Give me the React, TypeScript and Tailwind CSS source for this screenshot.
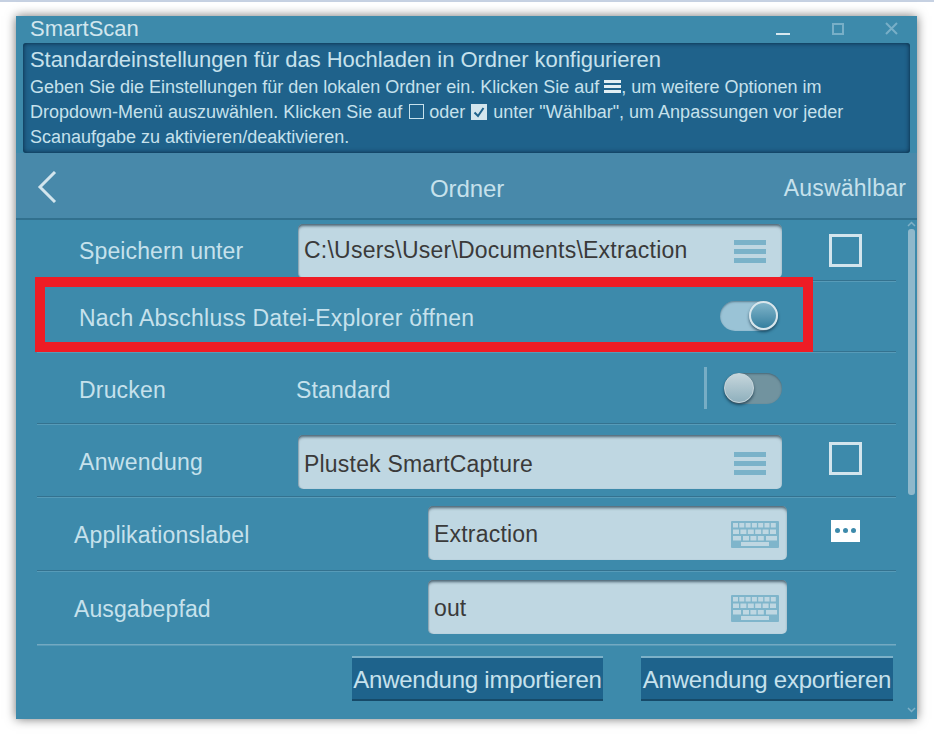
import React from "react";

const Hamburger = ({ className = "" }: { className?: string }) => (
  <div className={"flex flex-col justify-between w-[32px] h-[23px] " + className}>
    <div className="h-[5px] bg-[#7ab2c9]" />
    <div className="h-[5px] bg-[#7ab2c9]" />
    <div className="h-[5px] bg-[#7ab2c9]" />
  </div>
);

const Keyboard = () => (
  <svg width="48" height="27" viewBox="0 0 48 27" className="shrink-0">
    <rect width="48" height="27" rx="1" fill="#7fb5cb" />
    {[0, 1, 2, 3, 4, 5, 6].map((i) => (
      <rect key={"a" + i} x={2 + i * 6.3} y="2" width="5" height="4.5" fill="#bfd7e2" />
    ))}
    {[0, 1, 2, 3, 4, 5].map((i) => (
      <rect key={"b" + i} x={2 + i * 7.4} y="8.5" width="6" height="4.5" fill="#bfd7e2" />
    ))}
    <rect x="2" y="15" width="8" height="4.5" fill="#bfd7e2" />
    {[0, 1, 2].map((i) => (
      <rect key={"c" + i} x={12 + i * 7.4} y="15" width="6" height="4.5" fill="#bfd7e2" />
    ))}
    <rect x="35" y="15" width="11" height="4.5" fill="#bfd7e2" />
    <rect x="10" y="21" width="28" height="4" fill="#bfd7e2" />
  </svg>
);

const Check = () => <div className="w-[33px] h-[33px] border-[3px] border-[#d3e5ed]" />;

const Input = ({ w, children, icon, t, tp = "pb-[1px]" }: { w: string; children: string; icon: React.ReactNode; t: string; tp?: string }) => (
  <div className={`${w} h-[54px] flex items-center justify-between rounded-[5px] bg-[#bfd7e2] pl-[6px] shadow-[inset_0_3px_3px_-1px_rgba(50,75,90,0.8),inset_1px_0_1px_rgba(80,110,125,0.35)] text-[#3a3a3a] text-[23px] ${t}`}>
    <span className={tp}>{children}</span>
    {icon}
  </div>
);

const Row = ({ h, children, last }: { h: string; children: React.ReactNode; last?: boolean }) => (
  <div className={`${h} mx-[21px] w-[859px] flex items-center border-b ${last ? "border-[#74a9c1]" : "border-[#34728f]"} shadow-[0_1px_0_rgba(120,175,200,0.45)]`}>
    {children}
  </div>
);

export default function App() {
  return (
    <div className="w-[934px] h-[736px] bg-white overflow-hidden flex flex-col text-[#c6e1ec]" style={{ fontFamily: '"Liberation Sans", Arial, sans-serif' }}>
      <div className="h-[2px] bg-[#c6d1e2] shrink-0" />
      <div className="ml-[16px] mt-[14px] w-[901px] h-[703px] bg-[#3d8aab] flex flex-col relative shadow-[0_0_10px_rgba(0,0,0,0.55)]">
        {/* Title bar */}
        <div className="h-[27px] flex items-center justify-between pl-[14px] pr-[19px] shrink-0">
          <span className="text-[22px] leading-none text-[#d2e6ee] mb-[2px]">SmartScan</span>
          <div className="flex items-center gap-[41px] mb-[2px]">
            <div className="w-[14px] h-[2px] bg-[#d8e8ef] mt-[10px] mr-[1px]" />
            <div className="w-[12px] h-[12px] border-2 border-[#78afc7]" />
            <svg width="13" height="13" viewBox="0 0 13 13"><path d="M1 1L12 12M12 1L1 12" stroke="#78afc7" strokeWidth="2" /></svg>
          </div>
        </div>
        {/* Info */}
        <div className="mx-[7px] h-[110px] w-[887px] shrink-0 rounded-[3px] bg-[#1f628b] shadow-[inset_0_0_5px_rgba(0,20,40,0.8)] pl-[7px] pt-[3px] text-[#c6e1ec]">
          <div className="text-[22px] leading-[27px] tracking-[-0.06px]">Standardeinstellungen für das Hochladen in Ordner konfigurieren</div>
          <div className="text-[18px] leading-[25px] pt-[2px]">
            <div className="flex items-center whitespace-pre">
              {"Geben Sie die Einstellungen für den lokalen Ordner ein. Klicken Sie auf "}
              <span className="inline-flex flex-col justify-between w-[17px] h-[13px] mb-[2px]">
                <span className="h-[3px] bg-[#e2eef3]" /><span className="h-[3px] bg-[#e2eef3]" /><span className="h-[3px] bg-[#e2eef3]" />
              </span>
              , um weitere Optionen im
            </div>
            <div className="flex items-center whitespace-pre">
              {"Dropdown-Menü auszuwählen. Klicken Sie auf "}
              <span className="inline-block w-[15px] h-[15px] border border-[#c6e1ec] ml-[2px] mr-[5px] mb-[2px]" />
              {"oder "}
              <svg width="16" height="16" viewBox="0 0 16 16" className="ml-[1px] mr-[6px] mb-[2px]">
                <rect width="16" height="16" fill="#d3e5ed" />
                <path d="M3.5 8.5L7 12L12.5 4" fill="none" stroke="#1f628b" strokeWidth="2" />
              </svg>
              unter "Wählbar", um Anpassungen vor jeder
            </div>
            <div>Scanaufgabe zu aktivieren/deaktivieren.</div>
          </div>
        </div>
        {/* Header */}
        <div className="h-[67px] shrink-0 bg-[#4889aa] border-b-[2px] border-[#31708e] flex items-center justify-between pl-[21px] pr-[11px] relative">
          <svg width="20" height="32" viewBox="0 0 20 32" className="mt-[2px]"><path d="M18 1L3 16L18 31" fill="none" stroke="#d3e5ed" strokeWidth="3" /></svg>
          <span className="absolute left-[414px] top-[24px] text-[24px] leading-[24px] tracking-[-0.1px]">Ordner</span>
          <span className="text-[23px] leading-none tracking-[0.2px] mt-[5px]">Auswählbar</span>
        </div>
        {/* Rows */}
        <div className="flex-1 flex flex-col">
          <Row h="h-[61px]">
            <span className="ml-[42px] w-[219px] text-[23px] tracking-[0.13px] pt-[3px]">Speichern unter</span>
            <div className="mt-[2px]">
              <Input w="w-[484px]" t="tracking-[0.23px]" icon={<Hamburger className="mr-[16px]" />}>{"C:\\Users\\User\\Documents\\Extraction"}</Input>
            </div>
            <div className="ml-[47px] mt-[1px]"><Check /></div>
          </Row>
          <Row h="h-[71px]">
            <span className="ml-[42px] text-[23px] tracking-[0.23px] flex-1 pt-[5px]">Nach Abschluss Datei-Explorer öffnen</span>
            <div className="mr-[118px] w-[58px] h-[30px] rounded-full bg-[#9ac3d6] flex justify-end shadow-[inset_0_1px_2px_rgba(30,60,80,0.5)]">
              <div className="w-[29px] h-[29px] rounded-full border-2 border-[#d8e6ec] bg-gradient-to-b from-[#7fb4c9] to-[#347f9f] shadow-[0_2px_3px_rgba(0,30,50,0.6)]" />
            </div>
          </Row>
          <Row h="h-[72px]">
            <span className="ml-[42px] w-[217px] text-[23px] tracking-[0.18px] pt-[5px]">Drucken</span>
            <span className="flex-1 text-[23px] tracking-[0.17px] pt-[5px]">Standard</span>
            <div className="w-[3px] h-[42px] bg-[#77adc5] mr-[17px] mt-[1px]" />
            <div className="mr-[114px] w-[58px] h-[31px] rounded-full bg-[#71939f] shadow-[inset_0_1px_2px_rgba(30,60,80,0.5)] mt-[1px]">
              <div className="w-[30px] h-[30px] rounded-full border border-[#c7d6dc] bg-gradient-to-b from-[#c6d6dc] to-[#8fb0bd] shadow-[0_2px_3px_rgba(0,30,50,0.6)]" />
            </div>
          </Row>
          <Row h="h-[73px]">
            <span className="ml-[42px] w-[219px] text-[23px] tracking-[0.3px] pt-[4px]">Anwendung</span>
            <div className="mt-[4px]">
              <Input w="w-[484px]" t="tracking-[0.2px]" tp="pt-[4px]" icon={<Hamburger className="mr-[16px] mt-[3px]" />}>Plustek SmartCapture</Input>
            </div>
            <div className="ml-[47px] mb-[4px]"><Check /></div>
          </Row>
          <Row h="h-[74px]">
            <span className="ml-[37px] w-[354px] text-[23px] tracking-[0.17px] pt-[3px]">Applikationslabel</span>
            <div className="mb-[2px]">
              <Input w="w-[359px]" t="tracking-[0.2px]" tp="pt-[3px]" icon={<div className="mr-[8px] mt-[3px]"><Keyboard /></div>}>Extraction</Input>
            </div>
            <div className="ml-[44px] mb-[6px] w-[29px] h-[22px] bg-white flex items-center justify-center gap-[3px]">
              <span className="w-[5px] h-[5px] rounded-full bg-[#3d8aab]" />
              <span className="w-[5px] h-[5px] rounded-full bg-[#3d8aab]" />
              <span className="w-[5px] h-[5px] rounded-full bg-[#3d8aab]" />
            </div>
          </Row>
          <Row h="h-[74px]" last>
            <span className="ml-[37px] w-[354px] text-[23px] tracking-[0.1px] pt-[3px]">Ausgabepfad</span>
            <div className="mb-[1px]">
              <Input w="w-[359px]" t="tracking-[0.1px]" tp="pt-[3px]" icon={<div className="mr-[8px] mt-[3px]"><Keyboard /></div>}>out</Input>
            </div>
          </Row>
          <div className="flex pl-[336px] gap-[38px] mt-[11px]">
            <div className="w-[251px] h-[45px] bg-[#1e638c] border-t-[2px] border-[#7db1c8] border-b-[2px] border-b-[#164a69] flex items-center justify-center text-[24px] tracking-[-0.24px] whitespace-nowrap pt-[2px]">Anwendung importieren</div>
            <div className="w-[252px] h-[45px] bg-[#1e638c] border-t-[2px] border-[#7db1c8] border-b-[2px] border-b-[#164a69] flex items-center justify-center text-[24px] tracking-[-0.24px] whitespace-nowrap pt-[2px]">Anwendung exportieren</div>
          </div>
        </div>
        {/* Scrollbar overlay */}
        <div className="absolute left-[892px] top-[213px] w-[7px] h-[266px] rounded-[3px] bg-[#8fb8cb]" />
        <svg width="9" height="6" viewBox="0 0 9 6" className="absolute left-[891px] top-[205px]"><path d="M1 5L4.5 1.5L8 5" fill="none" stroke="#7fb0c6" strokeWidth="1.5" /></svg>
        <svg width="9" height="6" viewBox="0 0 9 6" className="absolute left-[891px] top-[691px]"><path d="M1 1L4.5 4.5L8 1" fill="none" stroke="#7fb0c6" strokeWidth="1.5" /></svg>
        {/* Red annotation */}
        <div className="absolute left-[19px] top-[261px] w-[778px] h-[75px] border-[10px] border-[#ee1c25]" />
      </div>
    </div>
  );
}
